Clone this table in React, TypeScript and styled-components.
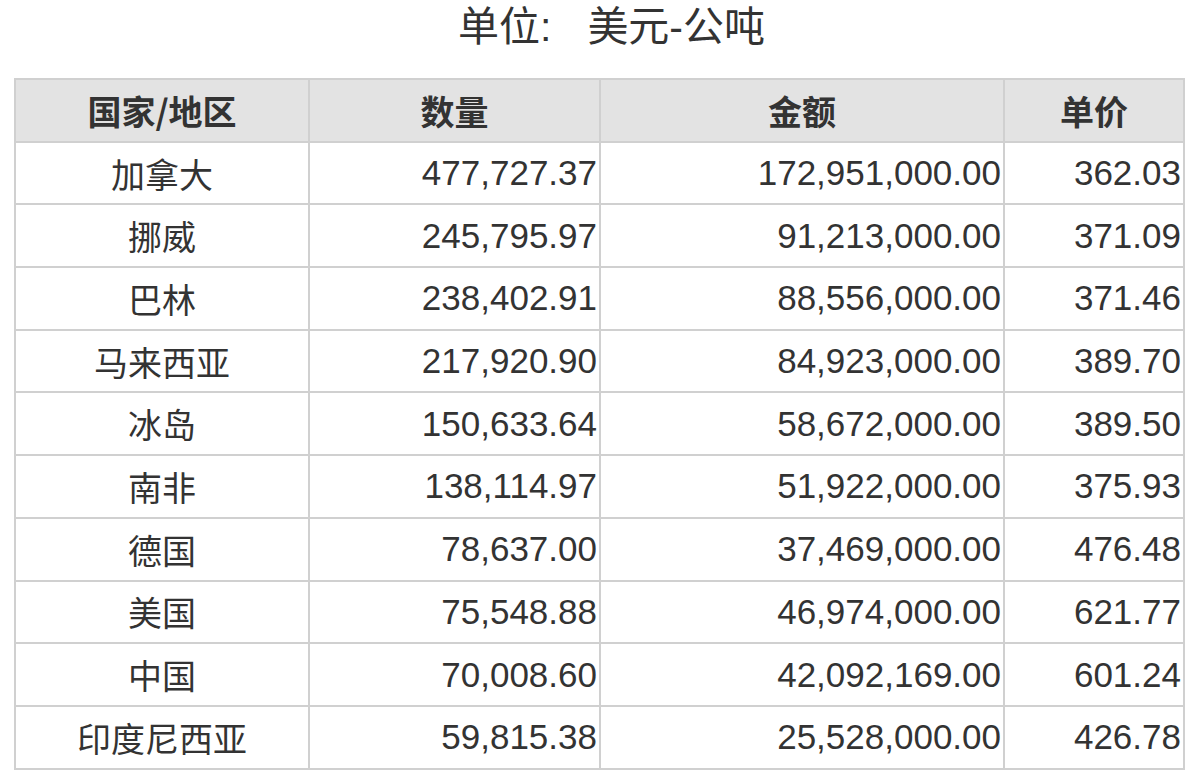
import styled, { createGlobalStyle } from "styled-components";

const GlobalStyle = createGlobalStyle`
    html, body {
        margin: 0;
        padding: 0;
        background: #ffffff;
    }
    body {
        font-family: "Liberation Sans", "Noto Sans CJK SC", sans-serif;
        color: #333333;
    }
`;

type Row = {
    country: string;
    amount: string;
    value: string;
    price: string;
};

const rows: Row[] = [
    { country: "加拿大", amount: "477,727.37", value: "172,951,000.00", price: "362.03" },
    { country: "挪威", amount: "245,795.97", value: "91,213,000.00", price: "371.09" },
    { country: "巴林", amount: "238,402.91", value: "88,556,000.00", price: "371.46" },
    { country: "马来西亚", amount: "217,920.90", value: "84,923,000.00", price: "389.70" },
    { country: "冰岛", amount: "150,633.64", value: "58,672,000.00", price: "389.50" },
    { country: "南非", amount: "138,114.97", value: "51,922,000.00", price: "375.93" },
    { country: "德国", amount: "78,637.00", value: "37,469,000.00", price: "476.48" },
    { country: "美国", amount: "75,548.88", value: "46,974,000.00", price: "621.77" },
    { country: "中国", amount: "70,008.60", value: "42,092,169.00", price: "601.24" },
    { country: "印度尼西亚", amount: "59,815.38", value: "25,528,000.00", price: "426.78" },
];

const App = () => {
    return (
        <>
            <GlobalStyle />
            <Page>
                <Title>
                    单位:<Gap />美元-公吨
                </Title>
                <Table>
                    <colgroup>
                        <col style={{ width: 294 }} />
                        <col style={{ width: 291 }} />
                        <col style={{ width: 404 }} />
                        <col style={{ width: 180 }} />
                    </colgroup>
                    <thead>
                        <tr>
                            <HeadCell>国家/地区</HeadCell>
                            <HeadCell>数量</HeadCell>
                            <HeadCell>金额</HeadCell>
                            <HeadCell>单价</HeadCell>
                        </tr>
                    </thead>
                    <tbody>
                        {rows.map((r) => (
                            <tr key={r.country}>
                                <NameCell>{r.country}</NameCell>
                                <NumCell>{r.amount}</NumCell>
                                <NumCell>{r.value}</NumCell>
                                <NumCell>{r.price}</NumCell>
                            </tr>
                        ))}
                    </tbody>
                </Table>
            </Page>
        </>
    );
};

export default App;

const Page = styled.div`
    width: 1199px;
    height: 771px;
    padding: 0 0 0 14px;
    box-sizing: border-box;
    overflow: hidden;
`;

const Title = styled.div`
    width: 1171px;
    height: 78px;
    padding: 3px 0 0 24px;
    box-sizing: border-box;
    display: flex;
    justify-content: center;
    align-items: flex-start;
    font-family: "Liberation Sans", "Noto Sans CJK SC", sans-serif;
    font-size: 41px;
    line-height: 48px;
    color: #333333;
`;

const Gap = styled.span`
    display: inline-block;
    width: 36px;
`;

const Table = styled.table`
    width: 1171px;
    border-collapse: collapse;
    table-layout: fixed;
    border: 2px solid #d0d0d0;

    tr {
        height: 62.7px;
    }
`;

const HeadCell = styled.th`
    background: #e3e3e3;
    border: 2px solid #d0d0d0;
    padding: 0;
    text-align: center;
    font-family: "Noto Sans CJK SC", sans-serif;
    font-size: 34px;
    font-weight: 700;
    color: #333333;
`;

const NameCell = styled.td`
    border: 2px solid #d0d0d0;
    padding: 0;
    text-align: center;
    font-family: "Noto Sans CJK SC", sans-serif;
    font-size: 34px;
    font-weight: 400;
    color: #333333;
`;

const NumCell = styled.td`
    border: 2px solid #d0d0d0;
    padding: 0 2px 0 0;
    text-align: right;
    font-family: "Liberation Sans", "Noto Sans CJK SC", sans-serif;
    font-size: 35px;
    color: #333333;
`;
